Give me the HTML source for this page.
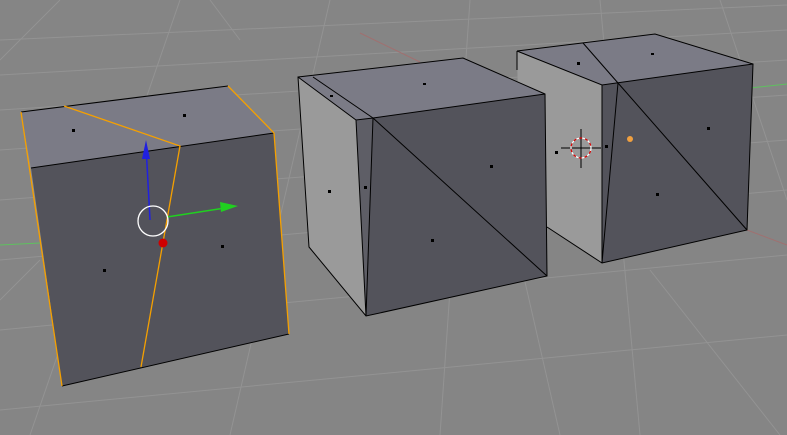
<!DOCTYPE html>
<html><head><style>html,body{margin:0;padding:0;background:#858585;overflow:hidden}svg{display:block}</style></head>
<body>
<svg width="787" height="435" viewBox="0 0 787 435" xmlns="http://www.w3.org/2000/svg">
<rect width="787" height="435" fill="#858585"/>
<g stroke="#939393" stroke-width="1" fill="none">
<path d="M0 40 L787 5 M0 75 L787 30 M0 110 L787 60 M0 150 L787 95 M0 200 L787 140 M0 260 L787 190 M0 330 L787 255 M0 410 L787 335"/>
<path d="M60 0 L0 60 M180 0 L30 435 M330 0 L230 435 M470 0 L440 435 M600 0 L640 435 M720 0 L787 200 M210 0 L240 40 M520 260 L560 435 M650 270 L780 435 M0 300 L40 260"/>
</g>
<path d="M0 245 L40 243" stroke="#5fc05f" stroke-width="1"/>
<path d="M750 88 L787 84" stroke="#5fc05f" stroke-width="1"/>
<path d="M360 33 L420 62" stroke="#a07070" stroke-width="1"/>
<path d="M747 230 L787 245" stroke="#a07070" stroke-width="1"/>
<!-- cube 1 -->
<polygon points="21,112 31,168 62,386" fill="#8e8e90"/>
<polygon points="21,112 228,86 274,133 31,168" fill="#7b7b86"/>
<polygon points="31,168 274,133 289,334 62,386" fill="#53535b"/>
<g fill="none" stroke="#000" stroke-width="1">
<path d="M21,112 L228,86 M31,168 L274,133 M62,386 L289,334"/>
</g>
<g fill="none" stroke="#f5a000" stroke-width="1.3">
<path d="M21,112 L62,386 M228,86 L274,133 L289,334 M64,106 L180,146 L141,367"/>
</g>
<path d="M150 220 L146 146" stroke="#2020e0" stroke-width="1.5"/>
<polygon points="146,140 142,159 150,159" fill="#2020e0"/>
<path d="M167 217 L225 208" stroke="#20d020" stroke-width="1.5"/>
<polygon points="238,206 220,202 221,212" fill="#20d020"/>
<circle cx="153" cy="221" r="15" fill="none" stroke="#fff" stroke-width="1.3"/>
<circle cx="163" cy="243" r="4.5" fill="#d00000"/>
<!-- cube 3 (behind) -->
<polygon points="517,51 602,85 602,263 547,227 520,200" fill="#9a9a9a"/>
<polygon points="517,51 655,34 753,64 602,85" fill="#7b7b86"/>
<polygon points="602,85 753,64 747,230 602,263" fill="#53535b"/>
<g fill="none" stroke="#000" stroke-width="1">
<path d="M517,51 L655,34 L753,64 L747,230 L602,263 L547,227 M517,51 L517,70 M517,51 L602,85 L753,64 M602,85 L602,263 M583,43 L618,83 L747,230 M618,83 L602,263"/>
</g>
<!-- cube 2 -->
<polygon points="298,77 356,120 366,316 309,247" fill="#9a9a9a"/>
<polygon points="298,77 463,58 545,94 373,118 356,120" fill="#7b7b86"/>
<polygon points="356,120 373,118 366,316" fill="#5e5e66"/>
<polygon points="373,118 545,94 547,276 366,316" fill="#53535b"/>
<g fill="none" stroke="#000" stroke-width="1">
<path d="M298,77 L463,58 L545,94 L547,276 L366,316 L309,247 Z M298,77 L356,120 L373,118 L545,94 M313,77 L373,118 M356,120 L366,316 L373,118 M373,118 L547,276"/>
</g>
<!-- cursor -->
<g stroke="#000" stroke-width="1">
<path d="M581 129 L581 168 M561 148 L601 148"/>
</g>
<circle cx="581" cy="148" r="10" fill="none" stroke="#fff" stroke-width="1.2" stroke-dasharray="3 3"/>
<circle cx="581" cy="148" r="10" fill="none" stroke="#e00000" stroke-width="1.2" stroke-dasharray="3 3" stroke-dashoffset="3"/>
<circle cx="630" cy="139" r="3" fill="#f0a040"/>
<!-- face dots -->
<g fill="#000">
<rect x="72" y="129" width="3" height="3"/><rect x="183" y="114" width="3" height="3"/>
<rect x="103" y="269" width="3" height="3"/><rect x="221" y="245" width="3" height="3"/>
<rect x="423" y="83" width="3" height="2"/><rect x="330" y="95" width="3" height="2"/>
<rect x="328" y="190" width="3" height="3"/><rect x="364" y="186" width="3" height="3"/>
<rect x="431" y="239" width="3" height="3"/><rect x="490" y="165" width="3" height="3"/>
<rect x="577" y="62" width="3" height="3"/><rect x="651" y="53" width="3" height="2"/>
<rect x="555" y="151" width="3" height="3"/><rect x="605" y="145" width="3" height="3"/>
<rect x="707" y="127" width="3" height="3"/><rect x="656" y="193" width="3" height="3"/>
</g>
</svg>
</body></html>
